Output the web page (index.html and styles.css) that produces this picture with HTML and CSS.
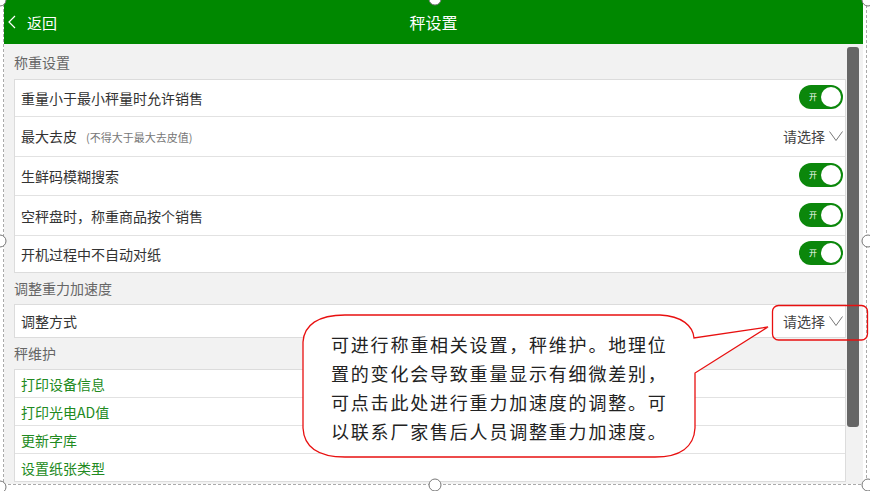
FILE: index.html
```html
<!DOCTYPE html>
<html lang="zh-CN">
<head>
<meta charset="UTF-8">
<meta name="viewport" content="width=device-width, initial-scale=1.0">
<title>秤设置</title>
<link rel="stylesheet" href="styles.css">
</head>
<body>
<div class="frame">
    <header class="topbar">
        <div class="back">
            <svg width="8" height="14" viewBox="0 0 8 14"><polyline points="7,1 1,7 7,13" fill="none" stroke="#fff" stroke-width="1.2"/></svg>
            <span>返回</span>
        </div>
        <h1 class="title">秤设置</h1>
        <div></div>
    </header>
    <div class="content">
        <div class="list">
            <div class="group-title first">称重设置</div>
            <div class="card">
                <div class="row"><span class="label">重量小于最小秤量时允许销售</span><span class="switch"><i>开</i></span></div>
                <div class="row"><span class="label">最大去皮<small>(不得大于最大去皮值)</small></span><span class="select">请选择<svg width="14" height="10" viewBox="0 0 14 10"><polyline points="0.5,0.5 7,9.5 13.5,0.5" fill="none" stroke="#777" stroke-width="1"/></svg></span></div>
                <div class="row"><span class="label">生鲜码模糊搜索</span><span class="switch"><i>开</i></span></div>
                <div class="row"><span class="label">空秤盘时，称重商品按个销售</span><span class="switch"><i>开</i></span></div>
                <div class="row"><span class="label">开机过程中不自动对纸</span><span class="switch"><i>开</i></span></div>
            </div>
            <div class="group-title">调整重力加速度</div>
            <div class="card">
                <div class="row short"><span class="label">调整方式</span><span class="select">请选择<svg width="14" height="10" viewBox="0 0 14 10"><polyline points="0.5,0.5 7,9.5 13.5,0.5" fill="none" stroke="#777" stroke-width="1"/></svg></span></div>
            </div>
            <div class="group-title">秤维护</div>
            <div class="card">
                <div class="row link">打印设备信息</div>
                <div class="row link">打印光电AD值</div>
                <div class="row link">更新字库</div>
                <div class="row link">设置纸张类型</div>
            </div>
        </div>
        <div class="scrollbar"><div class="thumb"></div></div>
    </div>
</div>

<!-- selection frame + annotation drawn over the page -->
<svg class="overlay" width="870" height="491" viewBox="0 0 870 491">
    <rect x="3.5" y="-2" width="863" height="486.5" fill="none" stroke="#aaa" stroke-dasharray="3 2"/>
    <path d="M 345,315 L 660,315 C 682,316 693,326 694,338 L 768,327 L 695,373 L 695,428 C 694,447 680,457 655,457 L 345,457 C 318,457 304,447 303,428 L 303,342 C 304,325 318,315 345,315 Z" fill="#fff" stroke="#e81010" stroke-width="1.3"/>
    <rect x="772.5" y="305.5" width="95" height="34.5" rx="6" fill="none" stroke="#e81010" stroke-width="1.3"/>
    <g fill="#fff" stroke="#777" stroke-width="1">
        <circle cx="0" cy="0" r="6"/>
        <circle cx="435" cy="-1" r="6"/>
        <circle cx="868" cy="0" r="6"/>
        <circle cx="0" cy="241" r="6"/>
        <circle cx="868" cy="241" r="6"/>
        <circle cx="0" cy="487" r="6"/>
        <circle cx="435" cy="485" r="6"/>
        <circle cx="868" cy="485" r="6"/>
    </g>
</svg>
<div class="bubble-text">可进行称重相关设置，秤维护。地理位<br>置的变化会导致重量显示有细微差别，<br>可点击此处进行重力加速度的调整。可<br>以联系厂家售后人员调整重力加速度。</div>
</body>
</html>
```

FILE: styles.css
```css
body {
    margin: 0;
    padding: 0;
    background-color: #fff;
    font-family: "Noto Sans CJK SC", "Liberation Sans", sans-serif;
    width: 870px;
    height: 491px;
    overflow: hidden;
    position: relative;
}

.frame {
    margin-left: 4px;
    width: 859px;
    height: 484px;
    overflow: hidden;
    background-color: #f2f2f2;
}

.topbar {
    height: 44px;
    background-color: #008800;
    color: #fff;
    display: grid;
    grid-template-columns: 1fr auto 1fr;
    align-items: center;
}

.back {
    display: flex;
    align-items: center;
    gap: 11px;
    padding-left: 4px;
    font-size: 15px;
}

.title {
    margin: 0;
    font-size: 16px;
    font-weight: normal;
}

.content {
    display: flex;
    height: 440px;
}

.list {
    flex: 1;
    padding-left: 10px;
}

.group-title {
    height: 31px;
    line-height: 31px;
    font-size: 14px;
    color: #666;
}

.group-title.first {
    height: 35px;
    line-height: 37px;
}

.card {
    background-color: #fff;
    border: 1px solid #dcdcdc;
}

.row {
    height: 38.7px;
    display: flex;
    align-items: center;
    justify-content: space-between;
    padding: 0 2px 0 6px;
    font-size: 14px;
    color: #333;
    border-top: 1px solid #e2e2e2;
}

.row:first-child {
    border-top: none;
    height: 36px;
}

.row:last-child {
    height: 36px;
}

.row.short {
    height: 32px;
}

.row.link {
    height: 27px;
    color: #218a21;
}

.label small {
    font-size: 11px;
    color: #777;
    margin-left: 9px;
}

.switch {
    position: relative;
    width: 44px;
    height: 24px;
    border-radius: 12px;
    background-color: #0b870b;
    margin-top: -2px;
}

.switch i {
    font-style: normal;
    font-size: 8px;
    color: #fff;
    position: absolute;
    left: 10px;
    top: 6px;
    line-height: 12px;
}

.switch::after {
    content: "";
    position: absolute;
    right: 2px;
    top: 2px;
    width: 20px;
    height: 20px;
    border-radius: 50%;
    background-color: #fff;
}

.select {
    display: flex;
    align-items: center;
    gap: 4px;
    color: #444;
}

.scrollbar {
    width: 17px;
    padding: 3px 4px 0 1px;
    box-sizing: border-box;
}

.thumb {
    height: 380px;
    background-color: #666;
    border-radius: 3px;
}

.overlay {
    position: absolute;
    left: 0;
    top: 0;
    pointer-events: none;
    overflow: visible;
}

.bubble-text {
    position: absolute;
    left: 331px;
    top: 330px;
    font-size: 18px;
    letter-spacing: 1.8px;
    line-height: 29px;
    color: #222;
    white-space: nowrap;
}
```
